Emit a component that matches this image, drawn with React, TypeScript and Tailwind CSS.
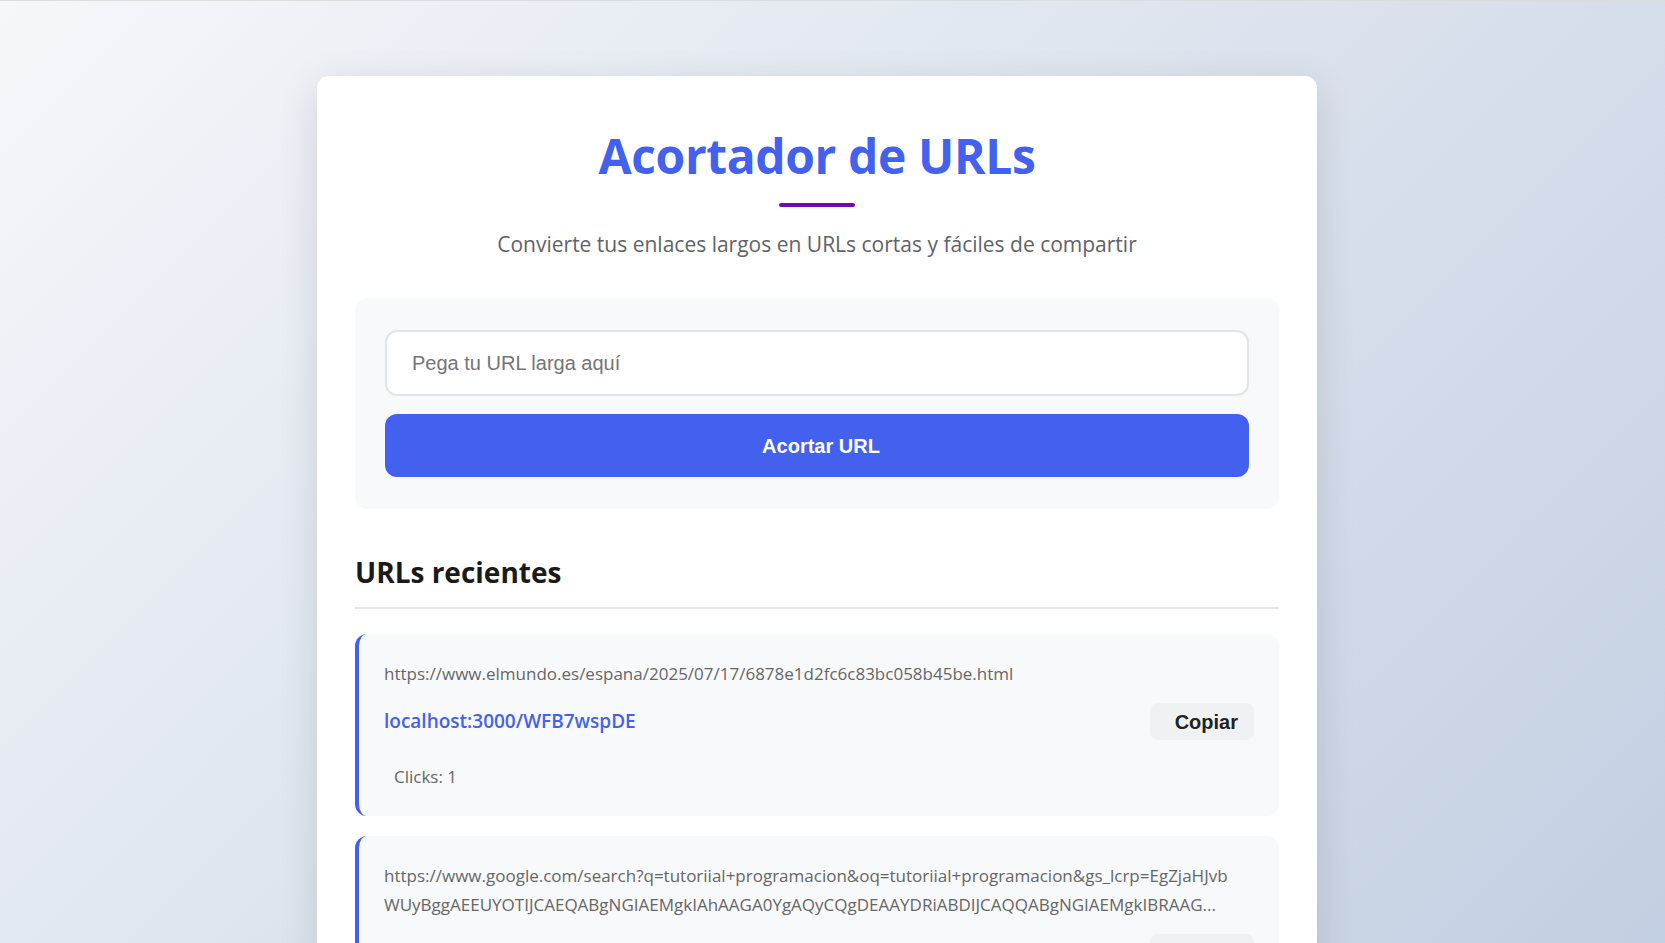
import { useState } from 'react';

type ShortUrl = {
  id: string;
  original: string;
  short: string;
  clicks: number;
};

const recentUrls: ShortUrl[] = [
  {
    id: 'WFB7wspDE',
    original: 'https://www.elmundo.es/espana/2025/07/17/6878e1d2fc6c83bc058b45be.html',
    short: 'localhost:3000/WFB7wspDE',
    clicks: 1,
  },
  {
    id: 'Qm3tPz8Ka',
    original:
      'https://www.google.com/search?q=tutoriial+programacion&oq=tutoriial+programacion&gs_lcrp=EgZjaHJvbWUyBggAEEUYOTIJCAEQABgNGIAEMgkIAhAAGA0YgAQyCQgDEAAYDRiABDIJCAQQABgNGIAEMgkIBRAAG...',
    short: 'localhost:3000/Qm3tPz8Ka',
    clicks: 0,
  },
];

function UrlItem({ item }: { item: ShortUrl }) {
  return (
    <div className="rounded-[12px] border-l-4 border-[#4361ee] bg-[#f8f9fa] px-[25px] pt-[25px] pb-[25px]">
      <p className="break-all pr-[14px] text-[17px] leading-[29px] text-[#666]">{item.original}</p>
      <div className="mt-[15px] flex items-center justify-between">
        <a href="#" className="text-[19px] font-semibold text-[#4361ee]">
          {item.short}
        </a>
        <button className="h-[37px] rounded-[8px] bg-[#f0f1f3] pr-[16px] pl-[25px] font-['Liberation_Sans',Arial,sans-serif] text-[20px] font-bold text-[#222]">
          Copiar
        </button>
      </div>
      <p className="mt-[22px] pl-[10px] text-[17px] leading-[29px] text-[#666]">Clicks: {item.clicks}</p>
    </div>
  );
}

export default function App() {
  const [url, setUrl] = useState<string>('');

  return (
    <div className="h-screen overflow-hidden border-t border-[#dcdcdc] bg-[linear-gradient(135deg,#f5f7fa_0%,#c3cfe2_100%)] pt-[75px] font-['Open_Sans',sans-serif]">
      <div className="ml-[317px] w-[1000px] rounded-[12px] bg-white px-[38px] pt-[50px] pb-10 shadow-[0_10px_40px_rgba(0,0,0,0.12)]">
        <header className="flex flex-col items-center">
          <h1 className="text-[48px] leading-[60px] font-bold tracking-[-0.4px] text-[#4361ee]">
            Acortador de URLs
          </h1>
          <div className="mt-[17px] h-[4px] w-[76px] rounded-full bg-[#7209b7]" />
          <p className="mt-[22px] text-[21px] leading-[30px] text-[#5f6368]">
            Convierte tus enlaces largos en URLs cortas y fáciles de compartir
          </p>
        </header>

        <div className="mt-[39px] flex flex-col gap-[18px] rounded-[12px] bg-[#f8f9fa] px-[30px] py-[32px]">
          <input
            value={url}
            onChange={(e) => setUrl(e.target.value)}
            placeholder="Pega tu URL larga aquí"
            className="h-[66px] w-full rounded-[12px] border-2 border-[#e1e4e8] bg-white px-[25px] font-['Liberation_Sans',Arial,sans-serif] text-[20px] text-[#333] outline-none placeholder:text-[#757575]"
          />
          <button className="h-[63px] w-full rounded-[12px] bg-[#4361ee] pl-[8px] font-['Liberation_Sans',Arial,sans-serif] text-[20px] font-bold text-white">
            Acortar URL
          </button>
        </div>

        <h2 className="mt-[45px] text-[28px] leading-[36px] font-bold text-[#1a1a1a]">URLs recientes</h2>
        <div className="mt-[17px] h-[2px] bg-[#e5e7eb]" />

        <div className="mt-[25px] flex flex-col gap-[20px]">
          {recentUrls.map((item) => (
            <UrlItem key={item.id} item={item} />
          ))}
        </div>
      </div>
    </div>
  );
}
